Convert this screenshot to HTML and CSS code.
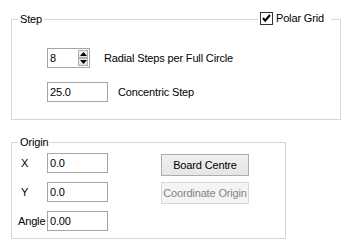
FILE: index.html
```html
<!DOCTYPE html>
<html>
<head>
	<meta charset="utf-8">
	<meta name="viewport" content="width=device-width, initial-scale=1">
	<title>Grid Settings</title>
	<link rel="stylesheet" href="styles.css">
</head>
<body>
	<div class="panel">
		<!-- step group: the polar grid checkbox sits over the top border on the right -->
		<fieldset class="group step">
			<legend>Step</legend>
			<label class="polar">
				<span class="check">
					<svg viewBox="0 0 11 11" width="11" height="11">
						<path d="M 2 5 L 4.2 7.6 L 9 2" fill="none" stroke="#000" stroke-width="2"></path>
					</svg>
				</span>
				Polar Grid
			</label>
			<div class="rows">
				<div class="row">
					<div class="spin">
						<input class="spin-input" type="text" value="8">
						<span class="spin-buttons">
							<span class="spin-btn">
								<svg viewBox="0 0 7 4" width="7" height="4"><path d="M 3.5 0 L 7 4 L 0 4 Z" fill="#000"></path></svg>
							</span>
							<span class="spin-btn">
								<svg viewBox="0 0 7 4" width="7" height="4"><path d="M 0 0 L 7 0 L 3.5 4 Z" fill="#000"></path></svg>
							</span>
						</span>
					</div>
					<span class="caption radial">Radial Steps per Full Circle</span>
				</div>
				<div class="row">
					<input class="field" type="text" value="25.0">
					<span class="caption">Concentric Step</span>
				</div>
			</div>
		</fieldset>

		<fieldset class="group origin">
			<legend>Origin</legend>
			<div class="origin-grid">
				<span class="name">X</span>
				<input class="field" type="text" value="0.0">
				<button class="btn first" type="button">Board Centre</button>

				<span class="name">Y</span>
				<input class="field" type="text" value="0.0">
				<button class="btn" type="button" disabled>Coordinate Origin</button>

				<span class="name angle">Angle</span>
				<input class="field" type="text" value="0.00">
			</div>
		</fieldset>
	</div>
</body>
</html>
```

FILE: styles.css
```css
* {
  box-sizing: border-box;
  padding: 0;
  margin: 0;
}
body {
  background: #fff;
  color: #000;
  font-family: "Liberation Sans", Arial, sans-serif;
  font-size: 11px;
  letter-spacing: -0.15px;
  line-height: 13px;
}

/* window content, the group boxes stack from the top left */
.panel {
  padding: 13px 0 0 11px;
  display: flex;
  flex-direction: column;
  align-items: flex-start;
  gap: 16px;
}

.group {
  position: relative;
  border: 1px solid #d5d5d5;
  padding: 0;
}
.group legend {
  margin-left: 6px;
  padding: 0 2px;
  line-height: 13px;
}
.step {
  width: 330px;
  height: 107px;
}
.origin {
  width: 275px;
  height: 103px;
}

/* checkbox drawn over the right part of the top border */
.polar {
  position: absolute;
  top: -14px;
  right: 9px;
  display: flex;
  align-items: center;
  gap: 3px;
  padding: 0 7px 0 2px;
  background: #fff;
  height: 13px;
}
.check {
  width: 13px;
  height: 13px;
  border: 1px solid #333;
  background: #fff;
  display: flex;
  align-items: center;
  justify-content: center;
}
.check svg {
  display: block;
}

.rows {
  padding: 22px 0 0 35px;
  display: flex;
  flex-direction: column;
  gap: 14px;
}
.row {
  display: flex;
  align-items: center;
  gap: 10px;
}
.caption.radial {
  margin-left: 4px;
}

/* text boxes */
.field,
.spin {
  height: 20px;
  border: 1px solid #a5a5a5;
  background: #fff;
}
.field {
  width: 61px;
  padding: 0 2px;
  font: inherit;
  letter-spacing: inherit;
  color: #000;
  outline: none;
}

/* numeric up/down */
.spin {
  width: 43px;
  display: flex;
}
.spin-input {
  flex: 1;
  min-width: 0;
  border: none;
  padding: 0 2px;
  font: inherit;
  color: #000;
  outline: none;
}
.spin-buttons {
  width: 11px;
  display: flex;
  flex-direction: column;
  padding: 1px 1px 1px 0;
  gap: 0;
}
.spin-btn {
  flex: 1;
  border: 1px solid #adadad;
  background: linear-gradient(#f2f2f2, #e2e2e2);
  display: flex;
  align-items: center;
  justify-content: center;
}
.spin-btn svg {
  display: block;
}

/* origin fields and buttons */
.origin-grid {
  padding: 4px 0 0 6px;
  display: grid;
  grid-template-columns: 29px 61px 88px;
  grid-auto-rows: 20px;
  row-gap: 9px;
  align-items: center;
}
.name {
  padding-left: 3px;
}
.name.angle {
  padding-left: 0;
}
.btn {
  margin-left: 53px;
  width: 88px;
  height: 22px;
  align-self: start;
  border: 1px solid #acacac;
  border-radius: 0;
  background: linear-gradient(#f0f0f0, #e5e5e5);
  font: inherit;
  letter-spacing: inherit;
  color: #000;
}
.btn.first {
  margin-top: 1px;
}
.btn:disabled {
  background: #f4f4f4;
  border-color: #d9d9d9;
  color: #838383;
}
```
